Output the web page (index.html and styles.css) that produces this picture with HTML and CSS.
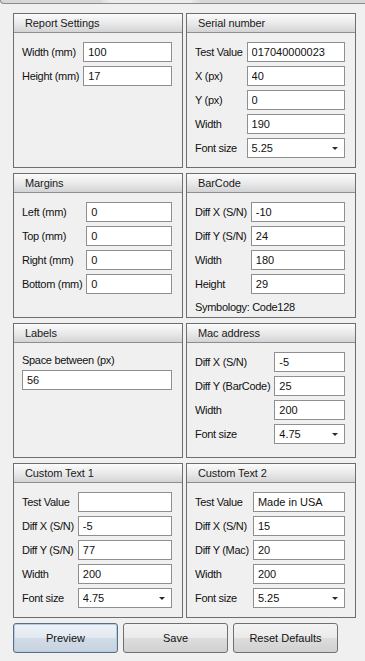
FILE: index.html
```html
<!DOCTYPE html>
<html lang="en">
<head>
  <meta charset="UTF-8" />
  <title>Label Settings</title>
  <link rel="stylesheet" href="styles.css">
</head>
<body>
  <div class="top-strip"></div>

  <div class="panels">
    <div class="panel">
      <div class="panel-title">Report Settings</div>
      <div class="form">
        <label>Width (mm)</label><input type="text" value="100" />
        <label>Height (mm)</label><input type="text" value="17" />
      </div>
    </div>

    <div class="panel">
      <div class="panel-title">Serial number</div>
      <div class="form">
        <label>Test Value</label><input type="text" value="017040000023" />
        <label>X (px)</label><input type="text" value="40" />
        <label>Y (px)</label><input type="text" value="0" />
        <label>Width</label><input type="text" value="190" />
        <label>Font size</label>
        <div class="combo"><select><option>5.25</option></select><span class="arrow"></span></div>
      </div>
    </div>

    <div class="panel">
      <div class="panel-title">Margins</div>
      <div class="form">
        <label>Left (mm)</label><input type="text" value="0" />
        <label>Top (mm)</label><input type="text" value="0" />
        <label>Right (mm)</label><input type="text" value="0" />
        <label>Bottom (mm)</label><input type="text" value="0" />
      </div>
    </div>

    <div class="panel">
      <div class="panel-title">BarCode</div>
      <div class="form">
        <label>Diff X (S/N)</label><input type="text" value="-10" />
        <label>Diff Y (S/N)</label><input type="text" value="24" />
        <label>Width</label><input type="text" value="180" />
        <label>Height</label><input type="text" value="29" />
        <p class="note">Symbology: Code128</p>
      </div>
    </div>

    <div class="panel">
      <div class="panel-title">Labels</div>
      <div class="stacked">
        <label>Space between (px)</label>
        <input type="text" value="56" />
      </div>
    </div>

    <div class="panel">
      <div class="panel-title">Mac address</div>
      <div class="form">
        <label>Diff X (S/N)</label><input type="text" value="-5" />
        <label>Diff Y (BarCode)</label><input type="text" value="25" />
        <label>Width</label><input type="text" value="200" />
        <label>Font size</label>
        <div class="combo"><select><option>4.75</option></select><span class="arrow"></span></div>
      </div>
    </div>

    <div class="panel">
      <div class="panel-title">Custom Text 1</div>
      <div class="form">
        <label>Test Value</label><input type="text" value="" />
        <label>Diff X (S/N)</label><input type="text" value="-5" />
        <label>Diff Y (S/N)</label><input type="text" value="77" />
        <label>Width</label><input type="text" value="200" />
        <label>Font size</label>
        <div class="combo"><select><option>4.75</option></select><span class="arrow"></span></div>
      </div>
    </div>

    <div class="panel">
      <div class="panel-title">Custom Text 2</div>
      <div class="form">
        <label>Test Value</label><input type="text" value="Made in USA" />
        <label>Diff X (S/N)</label><input type="text" value="15" />
        <label>Diff Y (Mac)</label><input type="text" value="20" />
        <label>Width</label><input type="text" value="200" />
        <label>Font size</label>
        <div class="combo"><select><option>5.25</option></select><span class="arrow"></span></div>
      </div>
    </div>
  </div>

  <div class="buttons">
    <button class="default">Preview</button>
    <button>Save</button>
    <button>Reset Defaults</button>
  </div>
</body>
</html>
```

FILE: styles.css
```css
body {
  margin: 0;
  background: #f0f0f0;
  font-family: "Liberation Sans", Arial, sans-serif;
  font-size: 11px;
  color: #111;
}

.top-strip {
  height: 3px;
  background: linear-gradient(to right, #d8d8d8 0%, #d8d8d8 27%, #ececec 30%, #ececec 52%, #d8d8d8 55%);
  border-bottom: 1px solid #8c8c8c;
  border-left: 1px solid #8c8c8c;
  border-bottom-left-radius: 4px;
}

.panels {
  display: grid;
  grid-template-columns: 170px 170px;
  grid-template-rows: 155px 145px 135px 155px;
  column-gap: 3px;
  row-gap: 5px;
  margin: 9px 0 0 13px;
}

.panel {
  border: 1px solid #6e6e6e;
  background: #f0f0f0;
}

.panel-title {
  height: 18px;
  line-height: 18px;
  padding-left: 11px;
  letter-spacing: -0.1px;
  background: linear-gradient(to bottom, #fcfcfc, #e6e6e7 60%, #d3d4d6);
  border-bottom: 1px solid #8e8e8e;
  color: #1a1a1a;
}

.form {
  display: grid;
  grid-template-columns: auto 1fr;
  column-gap: 4px;
  row-gap: 4px;
  align-items: center;
  padding: 9px 10px 0 8px;
}

.form label, .stacked label, .note {
  white-space: nowrap;
  letter-spacing: -0.3px;
}

input[type="text"], select {
  box-sizing: border-box;
  height: 20px;
  width: 100%;
  margin: 0;
  padding: 0 4px;
  border: 1px solid #8f8f8f;
  background: #fff;
  font-family: inherit;
  font-size: 11px;
  color: #111;
  outline: none;
}

.combo {
  position: relative;
}

select {
  appearance: none;
  -webkit-appearance: none;
  border-radius: 0;
}

.combo .arrow {
  position: absolute;
  right: 7px;
  top: 9px;
  width: 0;
  height: 0;
  border-left: 3px solid transparent;
  border-right: 3px solid transparent;
  border-top: 3px solid #2b2b2b;
}

.note {
  grid-column: 1 / 3;
  margin: 2px 0 0;
  line-height: 14px;
}

.stacked {
  padding: 10px 10px 0 8px;
}

.stacked label {
  display: block;
  line-height: 14px;
  margin-bottom: 3px;
}

.buttons {
  display: flex;
  gap: 5px;
  margin: 5px 0 0 13px;
}

button {
  width: 105px;
  height: 30px;
  border: 1px solid #707070;
  border-radius: 3px;
  background: linear-gradient(to bottom, #f3f3f3, #ebebeb 48%, #dddddd 52%, #d0d0d0);
  font-family: inherit;
  font-size: 11px;
  color: #111;
}

button.default {
  border-color: #5a6f84;
  box-shadow: inset 0 0 0 1px #b9cbe0;
  background: linear-gradient(to bottom, #eef3f8, #e2e9f1 48%, #d2dce7 52%, #c6d2de);
}
```
